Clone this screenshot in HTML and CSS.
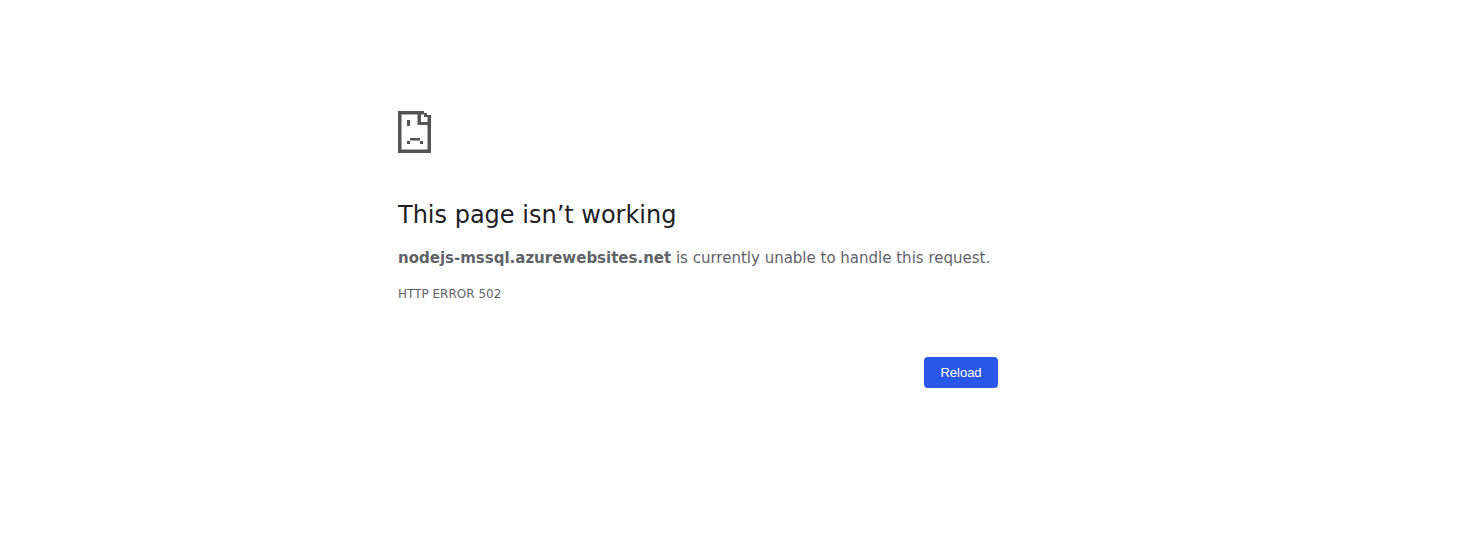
FILE: index.html
```html
<!DOCTYPE html>
<html lang="en">
<head>
  <meta charset="UTF-8">
  <meta name="viewport" content="width=device-width, initial-scale=1.0">
  <title>nodejs-mssql.azurewebsites.net</title>
  <link rel="stylesheet" href="styles.css">
</head>
<body>
  <div class="interstitial">
    <!-- sad page icon, pixel art -->
    <svg class="icon" width="33" height="42" viewBox="0 0 33 42" fill="#555">
      <path d="M0 0H26V2H29V4H33V42H0ZM3.5 3.5V38.5H29.5V14H19.5V3.5ZM23 3.5V11H29.5V6H26V3.5Z" fill-rule="evenodd"/>
      <rect x="9" y="9" width="3" height="6"/>
      <rect x="12" y="27" width="10" height="2.5"/>
      <rect x="9" y="30" width="3" height="3"/>
      <rect x="22" y="30" width="3" height="3"/>
    </svg>
    <h1 class="title">This page isn’t working</h1>
    <p class="summary"><strong>nodejs-mssql.azurewebsites.net</strong> is currently unable to handle this request.</p>
    <div class="error-code">HTTP ERROR 502</div>
    <div class="actions">
      <button class="reload" type="button">Reload</button>
    </div>
  </div>
</body>
</html>
```

FILE: styles.css
```css
body {
  margin: 0;
  background-color: #fff;
  color: #5f6368;
  font-family: "DejaVu Sans", sans-serif;
  font-size: 15px;
}

.interstitial {
  width: 600px;
  margin-left: 398px;
  padding-top: 111px;
}

.icon {
  display: block;
}

.title {
  margin: 46px 0 0;
  color: #202124;
  font-size: 24px;
  font-weight: 400;
  line-height: 32px;
}

.summary {
  margin: 17px 0 0;
  font-size: 15px;
  line-height: 20px;
}

.error-code {
  margin-top: 17px;
  font-size: 12px;
  line-height: 18px;
}

.actions {
  display: flex;
  justify-content: flex-end;
  margin-top: 54px;
}

.reload {
  width: 74px;
  height: 31px;
  padding: 0;
  border: none;
  border-radius: 4px;
  background-color: #2b56ea;
  color: #fff;
  font-family: "Liberation Sans", Arial, sans-serif;
  font-size: 13px;
}
```
